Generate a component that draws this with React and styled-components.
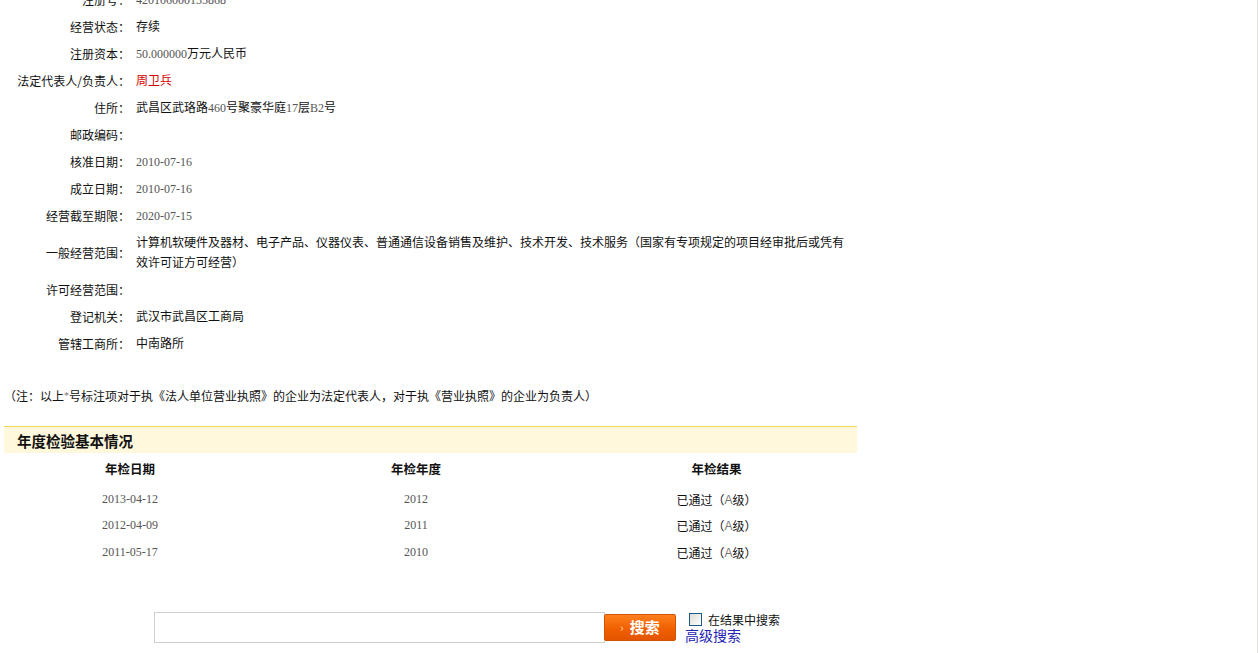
import React from "react";
import styled, { createGlobalStyle } from "styled-components";

const Global = createGlobalStyle`
  html, body { margin: 0; padding: 0; background: #fff; }
  body {
    font-family: "Liberation Serif", "Noto Sans CJK SC", serif;
    font-size: 12px;
    color: #111;
    overflow: hidden;
  }
  * { box-sizing: border-box; }
`;

const Page = styled.div`
  width: 100%;
  height: 100vh;
  border-right: 1px solid #e2e2da;
  overflow: hidden;
`;

const Content = styled.div`
  width: 857px;
  padding-left: 4px;
`;

const InfoList = styled.div`
  margin-top: -14px;
  display: flex;
  flex-direction: column;
`;

const Row = styled.div`
  display: flex;
  align-items: center;
  padding: 4px 0 3px;
  line-height: 20px;
`;

const Label = styled.div`
  width: 126px;
  flex: none;
  text-align: right;
  white-space: nowrap;
  font-family: "Noto Sans CJK SC", sans-serif;
  color: #111;
`;

const Value = styled.div`
  padding-left: 6px;
  width: 717px;
  color: ${(p) => (p.$red ? "#d40000" : "#111")};
`;

const Num = styled.span`
  font-family: "Liberation Serif", serif;
  color: #555;
`;

const Note = styled.div`
  margin-top: 29px;
  line-height: 20px;
  font-family: "Liberation Serif", "Noto Sans CJK SC", serif;
`;

const Star = styled.span`
  color: #777;
  font-size: 10px;
  vertical-align: 2px;
`;

const SectionHeader = styled.div`
  margin-top: 19px;
  height: 27px;
  border-top: 1px solid #f2d553;
  background: #fff8dc;
  display: flex;
  align-items: center;
  padding-left: 13px;
  font-family: "Noto Sans CJK SC", sans-serif;
  font-weight: bold;
  font-size: 14.5px;
  color: #111;
`;

const Table = styled.div`
  display: grid;
  grid-template-columns: 252px 320px 281px;
`;

const HeadCell = styled.div`
  height: 30px;
  display: flex;
  align-items: center;
  justify-content: center;
  font-family: "Noto Sans CJK SC", sans-serif;
  font-weight: bold;
  font-size: 12.5px;
`;

const Cell = styled.div`
  height: ${(p) => (p.$first ? "29px" : "27px")};
  padding-top: ${(p) => (p.$first ? "4px" : "0")};
  display: flex;
  align-items: center;
  justify-content: center;
`;

const Grey = styled.span`
  color: #777;
  font-family: "Liberation Sans", sans-serif;
`;

const SearchRow = styled.div`
  margin-top: 46px;
  margin-left: 150px;
  display: flex;
  align-items: flex-start;
`;

const SearchInput = styled.input`
  width: 451px;
  height: 31px;
  border: 1px solid #cfcfcf;
  outline: none;
  padding: 0 6px;
  font-size: 14px;
`;

const SearchButton = styled.button`
  margin-left: -1px;
  margin-top: 2px;
  width: 72px;
  height: 27px;
  border: 1px solid #d25400;
  border-radius: 2px;
  background: linear-gradient(#ff7f1e, #f06000 55%, #e35400);
  color: #fff;
  font-family: "Noto Sans CJK SC", sans-serif;
  font-weight: bold;
  font-size: 15px;
  display: flex;
  align-items: center;
  justify-content: center;
  gap: 6px;
  padding: 0 0 2px;
  cursor: pointer;
`;

const Chevron = styled.span`
  font-size: 11px;
  font-weight: normal;
  color: #ffe0c0;
`;

const Side = styled.div`
  margin-left: 9px;
  display: flex;
  flex-direction: column;
`;

const CheckLine = styled.label`
  display: flex;
  align-items: center;
  gap: 6px;
  margin-left: 4px;
  height: 14px;
  font-family: "Noto Sans CJK SC", sans-serif;
  font-size: 12px;
  color: #111;
`;

const Box = styled.input`
  appearance: none;
  margin: 0;
  width: 13px;
  height: 13px;
  border: 1px solid #1c5a8a;
  background: linear-gradient(135deg, #dcdcd4, #fff);
`;

const Link = styled.a`
  font-family: "Noto Sans CJK SC", sans-serif;
  font-size: 14px;
  color: #2424b4;
  text-decoration: none;
  line-height: 18px;
`;

const rows = [
  ["注册号：", <Num>420106000135868</Num>],
  ["经营状态：", "存续"],
  ["注册资本：", <><Num>50.000000</Num>万元人民币</>],
  ["法定代表人/负责人：", "周卫兵", true],
  ["住所：", <>武昌区武珞路<Num>460</Num>号聚豪华庭<Num>17</Num>层<Num>B2</Num>号</>],
  ["邮政编码：", ""],
  ["核准日期：", <Num>2010-07-16</Num>],
  ["成立日期：", <Num>2010-07-16</Num>],
  ["经营截至期限：", <Num>2020-07-15</Num>],
  ["一般经营范围：", "计算机软硬件及器材、电子产品、仪器仪表、普通通信设备销售及维护、技术开发、技术服务（国家有专项规定的项目经审批后或凭有效许可证方可经营）"],
  ["许可经营范围：", ""],
  ["登记机关：", "武汉市武昌区工商局"],
  ["管辖工商所：", "中南路所"],
];

const inspections = [
  ["2013-04-12", "2012"],
  ["2012-04-09", "2011"],
  ["2011-05-17", "2010"],
];

export default function App() {
  return (
    <>
      <Global />
      <Page>
        <Content>
          <InfoList>
            {rows.map(([l, v, red], i) => (
              <Row key={i}>
                <Label>{l}</Label>
                <Value $red={red}>{v || "\u00a0"}</Value>
              </Row>
            ))}
          </InfoList>
          <Note>
            （注：以上<Star>*</Star>号标注项对于执《法人单位营业执照》的企业为法定代表人，对于执《营业执照》的企业为负责人）
          </Note>
          <SectionHeader>年度检验基本情况</SectionHeader>
          <Table>
            <HeadCell>年检日期</HeadCell>
            <HeadCell>年检年度</HeadCell>
            <HeadCell>年检结果</HeadCell>
            {inspections.map(([d, y], i) => (
              <React.Fragment key={i}>
                <Cell $first={i === 0}><Num>{d}</Num></Cell>
                <Cell $first={i === 0}><Num>{y}</Num></Cell>
                <Cell $first={i === 0}>已通过（<Grey>A</Grey>级）</Cell>
              </React.Fragment>
            ))}
          </Table>
          <SearchRow>
            <SearchInput type="text" />
            <SearchButton type="button">
              <Chevron>›</Chevron>搜索
            </SearchButton>
            <Side>
              <CheckLine>
                <Box type="checkbox" />
                在结果中搜索
              </CheckLine>
              <Link href="#">高级搜索</Link>
            </Side>
          </SearchRow>
        </Content>
      </Page>
    </>
  );
}
